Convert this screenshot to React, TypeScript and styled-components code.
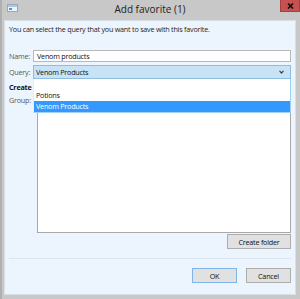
import * as React from 'react';
import styled, { createGlobalStyle } from 'styled-components';

const GlobalStyle = createGlobalStyle`
  html, body {
    margin: 0;
    padding: 0;
    background: #ffffff;
  }
  body {
    font-family: "Open Sans", "Noto Sans", "Liberation Sans", sans-serif;
  }
`;

const Window = styled.div`
  width: 300px;
  height: 299px;
  box-sizing: border-box;
  display: flex;
  flex-direction: column;
  background: #c8c8c8;
  border-left: 2px solid #b0b0b0;
  padding: 0 4px 4px 2px;
  overflow: hidden;
`;

const TitleBar = styled.div`
  height: 20px;
  flex: none;
  display: grid;
  grid-template-columns: 40px 1fr 40px;
  align-items: start;
`;

const TitleIcon = styled.div`
  padding: 4px 0 0 3px;
  line-height: 0;
`;

const Title = styled.div`
  text-align: center;
  font-size: 10px;
  line-height: 18px;
  color: #222;
`;

const CloseButton = styled.div`
  justify-self: end;
  margin-right: -4px;
  width: 20px;
  height: 12px;
  box-sizing: border-box;
  background: #c75050;
  border: 1px solid #a84040;
  border-top: none;
  display: flex;
  align-items: center;
  justify-content: center;
`;

const Content = styled.div`
  height: 275px;
  box-sizing: border-box;
  background: #ecf5fd;
  border: 1px solid #d7dfe7;
  padding: 3px 4px 0 4px;
  display: flex;
  flex-direction: column;
  font-size: 7.2px;
  letter-spacing: -0.22px;
  line-height: 10px;
  color: #1e1e1e;
`;

const Intro = styled.div`
  height: 22px;
  flex: none;
`;

const FieldRow = styled.div<{ $gap?: number }>`
  flex: none;
  display: grid;
  grid-template-columns: 24px 1fr;
  align-items: center;
  margin-top: ${(p) => p.$gap ?? 0}px;
`;

const Label = styled.span`
  color: #555;
  white-space: nowrap;
`;

const TextInput = styled.div`
  height: 12px;
  box-sizing: border-box;
  background: #fff;
  border: 1px solid #b8b8b8;
  padding-left: 3px;
  color: #111;
`;

const ComboWrap = styled.div`
  position: relative;
`;

const Combo = styled.div`
  height: 14px;
  box-sizing: border-box;
  background: #c8e3f6;
  border: 1px solid #8fbde0;
  padding: 0 6px 0 2px;
  display: flex;
  align-items: center;
  justify-content: space-between;
  color: #111;
`;

const DropList = styled.div`
  position: absolute;
  top: 14px;
  left: 0;
  right: 0;
  z-index: 2;
  background: #fff;
  border: 1px solid #9fd0ee;
  border-top: none;
  border-left-color: #e6eef5;
`;

const Option = styled.div<{ $active?: boolean }>`
  height: 11px;
  line-height: 11px;
  padding-left: 2px;
  background: ${(p) => (p.$active ? '#3399ff' : 'transparent')};
  color: ${(p) => (p.$active ? '#fff' : '#111')};
`;

const SectionLabel = styled.div`
  flex: none;
  margin-top: 2px;
  line-height: 12px;
  font-weight: 700;
  color: #111;
`;

const GroupRow = styled.div`
  flex: none;
  display: grid;
  grid-template-columns: 28px 1fr;
  margin-top: 1px;
`;

const GroupLabel = styled.span`
  color: #555;
  line-height: 12px;
`;

const TreeBox = styled.div`
  height: 139px;
  box-sizing: border-box;
  background: #fff;
  border: 1px solid #a8a8a8;
`;

const ButtonRow = styled.div<{ $top: number }>`
  flex: none;
  display: flex;
  justify-content: flex-end;
  gap: 9px;
  margin-top: ${(p) => p.$top}px;
`;

const Button = styled.div<{ $w: number; $default?: boolean }>`
  width: ${(p) => p.$w}px;
  height: 15px;
  box-sizing: border-box;
  background: #e1e1e1;
  border: 1px solid ${(p) => (p.$default ? '#7eb4ea' : '#adadad')};
  display: flex;
  align-items: center;
  justify-content: center;
  color: #111;
`;

const Separator = styled.div`
  flex: none;
  height: 1px;
  background: #d9e6f2;
  margin-top: 9px;
`;

export default function App() {
  return (
    <>
      <GlobalStyle />
      <Window>
        <TitleBar>
          <TitleIcon>
            <svg width="11" height="8" viewBox="0 0 11 8">
              <rect x="0.5" y="0.5" width="10" height="7" fill="#eef3f8" stroke="#9aa8b8" />
              <rect x="1" y="1" width="9" height="2" fill="#a8c8e8" />
              <rect x="2" y="4" width="3" height="2" fill="#5a8fc8" />
            </svg>
          </TitleIcon>
          <Title>Add favorite (1)</Title>
          <CloseButton>
            <svg width="7" height="6" viewBox="0 0 7 6">
              <path d="M1 0.5 L6 5.5 M6 0.5 L1 5.5" stroke="#111" strokeWidth="1.6" />
            </svg>
          </CloseButton>
        </TitleBar>
        <Content>
          <Intro>You can select the query that you want to save with this favorite.</Intro>
          <FieldRow $gap={4}>
            <Label>Name:</Label>
            <TextInput>Venom products</TextInput>
          </FieldRow>
          <FieldRow $gap={3}>
            <Label>Query:</Label>
            <ComboWrap>
              <Combo>
                <span>Venom Products</span>
                <svg width="5" height="4" viewBox="0 0 5 4">
                  <path d="M0.5 0.8 L2.5 3 L4.5 0.8" stroke="#444" strokeWidth="1.2" fill="none" />
                </svg>
              </Combo>
              <DropList>
                <Option />
                <Option>Potions</Option>
                <Option $active>Venom Products</Option>
              </DropList>
            </ComboWrap>
          </FieldRow>
          <SectionLabel>Create favorite</SectionLabel>
          <GroupRow>
            <GroupLabel>Group:</GroupLabel>
            <TreeBox />
          </GroupRow>
          <ButtonRow $top={1}>
            <Button $w={64}>Create folder</Button>
          </ButtonRow>
          <Separator />
          <ButtonRow $top={9}>
            <Button $w={45} $default>OK</Button>
            <Button $w={45}>Cancel</Button>
          </ButtonRow>
        </Content>
      </Window>
    </>
  );
}
